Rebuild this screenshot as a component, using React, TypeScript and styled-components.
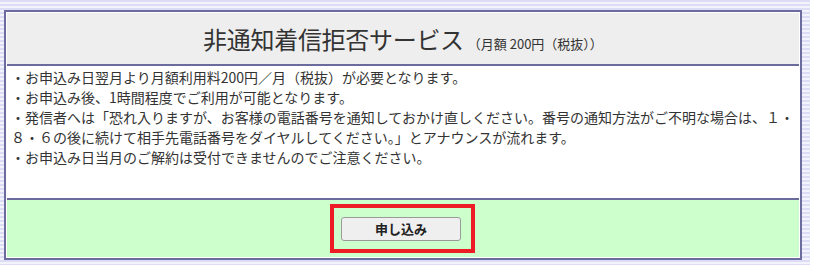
import { createGlobalStyle } from 'styled-components';
import styled from 'styled-components';

const GlobalStyle = createGlobalStyle`
  html, body {
    margin: 0;
    padding: 0;
    background: #ffffff;
    font-family: 'Noto Sans CJK JP', 'Noto Sans', sans-serif;
  }
`

const notes = [
  '・お申込み日翌月より月額利用料200円／月（税抜）が必要となります。',
  '・お申込み後、1時間程度でご利用が可能となります。',
  '・発信者へは「恐れ入りますが、お客様の電話番号を通知しておかけ直しください。番号の通知方法がご不明な場合は、１・８・６の後に続けて相手先電話番号をダイヤルしてください。」とアナウンスが流れます。',
  '・お申込み日当月のご解約は受付できませんのでご注意ください。',
]

const App = () => {
  return (
    <>
      <GlobalStyle />
      <Page>
        <Panel>
          <Header>
            <Title>非通知着信拒否サービス</Title>
            <Price>（月額 200円（税抜））</Price>
          </Header>
          <Notes>
            {notes.map((n, i) => (
              <Note key={i}>{n}</Note>
            ))}
          </Notes>
          <Footer>
            <Highlight>
              <ApplyButton type="button">申し込み</ApplyButton>
            </Highlight>
          </Footer>
        </Panel>
      </Page>
    </>
  )
}

export default App

const Page = styled.div`
  width: 810px;
  box-sizing: border-box;
  padding: 10px 8px 5px 4px;
  background: repeating-linear-gradient(
    to bottom,
    #dcdcf6 0px,
    #dcdcf6 2px,
    #f3f3fc 2px,
    #f3f3fc 4px
  );
`
const Panel = styled.div`
  width: 798px;
  box-sizing: border-box;
  border: 2px solid #6b6b9e;
  padding: 1px;
  background: #ffffff;
  display: flex;
  flex-direction: column;
`
const Header = styled.div`
  height: 53px;
  background: #eeeeee;
  border-bottom: 2px solid #6b6b9e;
  display: flex;
  align-items: baseline;
  justify-content: center;
  padding-top: 10px;
  box-sizing: border-box;
  color: #333333;
`
const Title = styled.span`
  font-size: 24px;
  line-height: 32px;
  letter-spacing: -0.3px;
`
const Price = styled.span`
  font-size: 13px;
  margin-left: 4px;
`
const Notes = styled.div`
  height: 134px;
  box-sizing: border-box;
  padding: 1px 4px 0 4px;
  background: #ffffff;
  border-bottom: 2px solid #6b6b9e;
`
const Note = styled.div`
  font-size: 14px;
  line-height: 20px;
  color: #333333;
`
const Footer = styled.div`
  height: 57px;
  background: #ccffcc;
  display: flex;
  align-items: center;
  justify-content: center;
`
const Highlight = styled.div`
  border: 4px solid #ee1c25;
  padding: 7px 10px 8px 7px;
  margin-left: -1px;
`
const ApplyButton = styled.button`
  width: 120px;
  height: 24px;
  background: #efefef;
  border: 1px solid #9a9a9a;
  border-radius: 3px;
  font-family: 'Noto Sans CJK JP', sans-serif;
  font-size: 13px;
  font-weight: 700;
  color: #222222;
  padding: 0;
`
